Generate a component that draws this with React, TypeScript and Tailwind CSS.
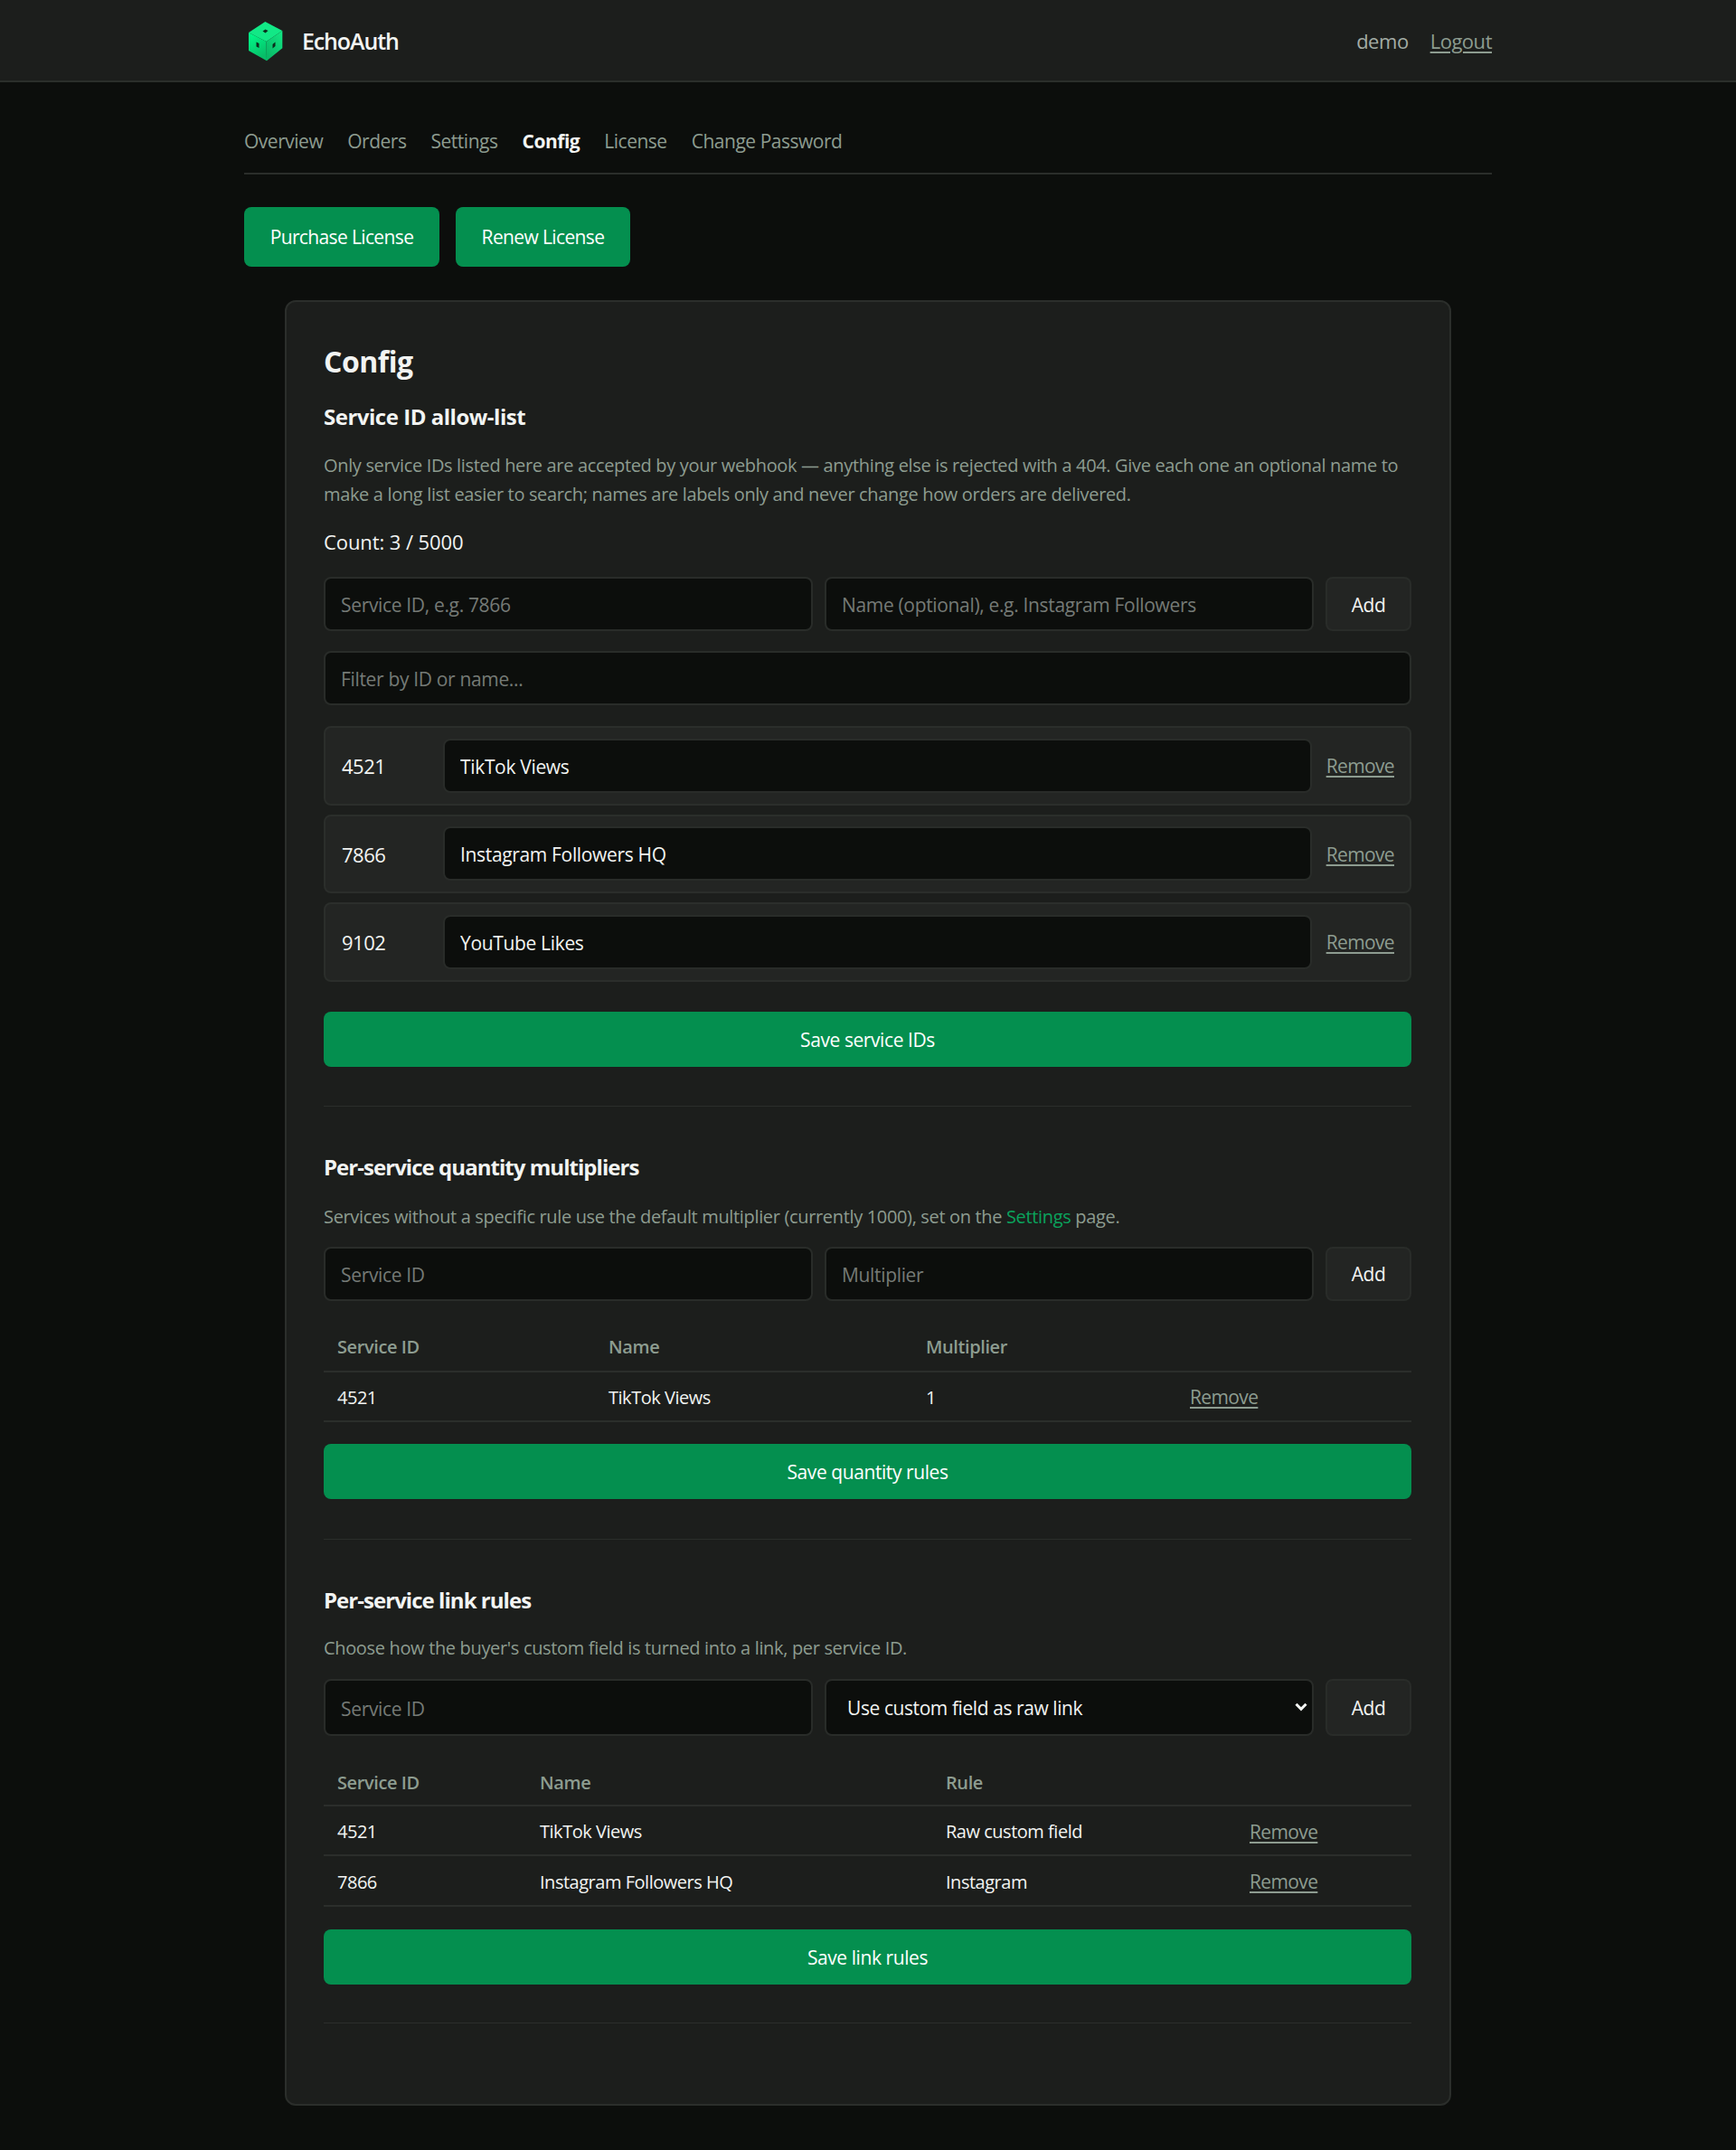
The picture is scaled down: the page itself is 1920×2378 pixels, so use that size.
import { useState } from "react";

const tabs = ["Overview", "Orders", "Settings", "Config", "License", "Change Password"];
const services = [
  { id: "4521", name: "TikTok Views" },
  { id: "7866", name: "Instagram Followers HQ" },
  { id: "9102", name: "YouTube Likes" },
];

function Logo() {
  return (
    <svg width="38" height="44" viewBox="0 0 38 44" className="shrink-0">
      <defs>
        <linearGradient id="cubeLeft" x1="0" y1="0" x2="0.4" y2="1">
          <stop offset="0" stopColor="#00ff8c" />
          <stop offset="1" stopColor="#07bd68" />
        </linearGradient>
        <linearGradient id="cubeRight" x1="1" y1="0" x2="0.3" y2="1">
          <stop offset="0" stopColor="#12e985" />
          <stop offset="1" stopColor="#09b866" />
        </linearGradient>
      </defs>
      <path d="M18.3 0 37.3 10 19.5 22 0 12Z" fill="#12e886" />
      <path d="M0 12 19.5 22 20 43.3 0 32Z" fill="url(#cubeLeft)" />
      <path d="M37.3 10V29.3L20 43.3 19.5 22Z" fill="url(#cubeRight)" />
      <path d="M15.5 10.5 18.5 8.5 21.5 10 18.5 12.5Z" fill="#0b2c1c" />
      <path d="M8.5 22.5 11.5 24V29L8.5 27.5Z" fill="#0b2c1c" />
      <path d="M26.5 25 29.5 22.5V27L26.5 29.5Z" fill="#0b2c1c" />
    </svg>
  );
}

function TextInput({ placeholder, value, className = "" }: { placeholder?: string; value?: string; className?: string }) {
  return (
    <input
      placeholder={placeholder}
      defaultValue={value}
      className={`h-[60px] w-full min-w-0 rounded-[8px] border-2 border-[#292c29] bg-[#0c0e0c] px-[17px] pt-[2px] text-[21px] tracking-[-0.016em] text-[#f2f4f2] outline-none placeholder:text-[#757a76] ${className}`}
    />
  );
}

function AddButton({ tall }: { tall?: boolean }) {
  return (
    <button className={`${tall ? "h-[63px]" : "h-[60px]"} rounded-[8px] border-2 border-[#292c29] bg-[#232523] pt-[3px] text-[21px] tracking-[-0.02em] text-[#f2f4f2]`}>
      Add
    </button>
  );
}

function SaveButton({ children, className = "" }: { children: string; className?: string }) {
  return (
    <button className={`block h-[61px] w-full rounded-[8px] bg-[#048f4f] pt-[4px] text-[21px] font-medium tracking-[-0.02em] text-white ${className}`}>
      {children}
    </button>
  );
}

function RemoveLink() {
  return (
    <a href="#" className="text-[21px] tracking-[-0.03em] text-[#8d9c90] underline underline-offset-[3px]">
      Remove
    </a>
  );
}

function Divider({ className = "" }: { className?: string }) {
  return <div className={`h-px bg-[#2b2e2b] ${className}`} />;
}

function SectionTitle({ children, className = "" }: { children: string; className?: string }) {
  return <h2 className={`text-[24px] leading-[32px] font-bold text-[#f2f4f2] ${className}`}>{children}</h2>;
}

export default function App() {
  const [active] = useState("Config");

  return (
    <div className="min-h-[2378px] bg-[#0c0e0c] font-['Open_Sans','Noto_Sans',sans-serif] tracking-[-0.03em] text-[#f2f4f2]">
      <header className="h-[91px] border-b-2 border-[#2b2e2b] bg-[#1c1e1c]">
        <div className="mx-auto flex h-full w-[1380px] items-center justify-between pt-[2px] pl-[5px]">
          <div className="flex items-center gap-[21px]">
            <Logo />
            <span className="text-[25px] font-semibold tracking-[-0.045em] text-[#f2f4f2]">EchoAuth</span>
          </div>
          <div className="flex items-center gap-[24px] text-[22px]">
            <span className="text-[#a3aca5]">demo</span>
            <a href="#" className="text-[#8d9c90] underline underline-offset-[3px]">
              Logout
            </a>
          </div>
        </div>
      </header>

      <div className="mx-auto w-[1380px]">
        <nav className="flex gap-[27px] border-b-2 border-[#2b2e2b] pt-[50px] pb-[20px] text-[21px] leading-[30px]">
          {tabs.map((t) => (
            <a key={t} href="#" className={t === active ? "font-bold text-[#f2f4f2]" : "text-[#8d9c90]"}>
              {t}
            </a>
          ))}
        </nav>

        <div className="mt-[36px] flex gap-[18px]">
          <button className="h-[66px] w-[216px] rounded-[8px] bg-[#048f4f] pt-[2px] text-[21px] font-medium tracking-[-0.03em] text-white">Purchase License</button>
          <button className="h-[66px] w-[193px] rounded-[8px] bg-[#048f4f] pt-[2px] text-[21px] font-medium tracking-[-0.03em] text-white">Renew License</button>
        </div>

        <main className="mx-[45px] mt-[37px] rounded-[12px] border-2 border-[#2b2e2b] bg-[#1c1e1c] pt-[42px] pr-[42px] pb-[89px] pl-[41px]">
          <h1 className="text-[32px] leading-[48px] font-bold text-[#f2f4f2]">Config</h1>
          <SectionTitle className="mt-[21px]">Service ID allow-list</SectionTitle>
          <p className="mt-[22px] text-[20px] leading-[32px] tracking-[-0.017em] text-[#8d9c90]">
            Only service IDs listed here are accepted by your webhook — anything else is rejected with a 404. Give each one an optional name to
            <br />
            make a long list easier to search; names are labels only and never change how orders are delivered.
          </p>
          <p className="mt-[21px] text-[22px] leading-[30px] tracking-[-0.004em]">Count: 3 / 5000</p>

          <div className="mt-[24px] grid grid-cols-[1fr_1fr_95px] gap-[13px]">
            <TextInput placeholder="Service ID, e.g. 7866" />
            <TextInput placeholder="Name (optional), e.g. Instagram Followers" />
            <AddButton />
          </div>
          <TextInput placeholder="Filter by ID or name..." className="mt-[22px] block" />

          <div className="mt-[23px] flex flex-col gap-[10px]">
            {services.map((s) => (
              <div key={s.id} className="flex h-[87.5px] items-center rounded-[8px] border-2 border-[#2b2e2b] bg-[#232523] pr-[17px] pl-[18px]">
                <span className="w-[112px] shrink-0 pt-[2px] text-[22px]">{s.id}</span>
                <TextInput value={s.name} className="flex-1" />
                <span className="ml-[16px] shrink-0 pt-[2px]">
                  <RemoveLink />
                </span>
              </div>
            ))}
          </div>

          <SaveButton className="mt-[33px]">Save service IDs</SaveButton>
          <Divider className="mt-[43px]" />

          <SectionTitle className="mt-[51px] tracking-[-0.04em]">Per-service quantity multipliers</SectionTitle>
          <p className="mt-[23px] text-[20px] leading-[32px] tracking-[-0.017em] text-[#8d9c90]">
            Services without a specific rule use the default multiplier (currently 1000), set on the{" "}
            <a href="#" className="text-[#0aa35c]">
              Settings
            </a>{" "}
            page.
          </p>
          <div className="mt-[17px] grid grid-cols-[1fr_1fr_95px] gap-[13px]">
            <TextInput placeholder="Service ID" />
            <TextInput placeholder="Multiplier" />
            <AddButton />
          </div>

          <table className="mt-[24px] w-full table-fixed text-left text-[20px]">
            <colgroup>
              <col className="w-[300px]" />
              <col className="w-[351px]" />
              <col className="w-[292px]" />
              <col />
            </colgroup>
            <thead>
              <tr className="h-[54px] border-b-2 border-[#2b2e2b] tracking-[-0.02em] text-[#8d9c90]">
                <th className="pt-[2px] pl-[15px] font-semibold">Service ID</th>
                <th className="pt-[2px] pl-[15px] font-semibold">Name</th>
                <th className="pt-[2px] pl-[15px] font-semibold">Multiplier</th>
                <th />
              </tr>
            </thead>
            <tbody>
              <tr className="h-[55px] border-b-2 border-[#2b2e2b]">
                <td className="pt-[4px] pl-[15px]">4521</td>
                <td className="pt-[4px] pl-[15px]">TikTok Views</td>
                <td className="pt-[4px] pl-[15px]">1</td>
                <td className="pt-[4px] pl-[15px]">
                  <RemoveLink />
                </td>
              </tr>
            </tbody>
          </table>

          <SaveButton className="mt-[24px]">Save quantity rules</SaveButton>
          <Divider className="mt-[44px]" />

          <SectionTitle className="mt-[51px] tracking-[-0.04em]">Per-service link rules</SectionTitle>
          <p className="mt-[21px] text-[20px] leading-[32px] tracking-[-0.017em] text-[#8d9c90]">Choose how the buyer's custom field is turned into a link, per service ID.</p>
          <div className="mt-[18px] grid grid-cols-[1fr_1fr_95px] gap-[13px]">
            <TextInput placeholder="Service ID" className="!h-[63px] !pt-[3px]" />
            <div className="relative min-w-0">
              <select className="h-[63px] w-full appearance-none rounded-[8px] border-2 border-[#292c29] bg-[#0c0e0c] pt-[4px] pr-[30px] pl-[23px] text-[21px] tracking-[-0.02em] text-[#f2f4f2] outline-none">
                <option>Use custom field as raw link</option>
              </select>
              <svg viewBox="0 0 14 10" className="pointer-events-none absolute top-[26px] right-[7px] h-[10px] w-[14px]" fill="none" stroke="#f2f4f2" strokeWidth="3">
                <path d="M1.5 1.8 7 7.4 12.5 1.8" />
              </svg>
            </div>
            <AddButton tall />
          </div>

          <table className="mt-[27px] w-full table-fixed text-left text-[20px]">
            <colgroup>
              <col className="w-[224px]" />
              <col className="w-[449px]" />
              <col className="w-[336px]" />
              <col />
            </colgroup>
            <thead>
              <tr className="h-[50px] border-b-2 border-[#2b2e2b] tracking-[-0.02em] text-[#8d9c90]">
                <th className="pt-[2px] pl-[15px] font-semibold">Service ID</th>
                <th className="pt-[2px] pl-[15px] font-semibold">Name</th>
                <th className="pt-[2px] pl-[15px] font-semibold">Rule</th>
                <th />
              </tr>
            </thead>
            <tbody>
              <tr className="h-[55.5px] border-b-2 border-[#2b2e2b]">
                <td className="pt-[4px] pl-[15px]">4521</td>
                <td className="pt-[4px] pl-[15px]">TikTok Views</td>
                <td className="pt-[4px] pl-[15px]">Raw custom field</td>
                <td className="pt-[4px] pl-[15px]">
                  <RemoveLink />
                </td>
              </tr>
              <tr className="h-[55.5px] border-b-2 border-[#2b2e2b]">
                <td className="pt-[4px] pl-[15px]">7866</td>
                <td className="pt-[4px] pl-[15px]">Instagram Followers HQ</td>
                <td className="pt-[4px] pl-[15px]">Instagram</td>
                <td className="pt-[4px] pl-[15px]">
                  <RemoveLink />
                </td>
              </tr>
            </tbody>
          </table>

          <SaveButton className="mt-[25px]">Save link rules</SaveButton>
          <Divider className="mt-[42px]" />
        </main>
      </div>
    </div>
  );
}
